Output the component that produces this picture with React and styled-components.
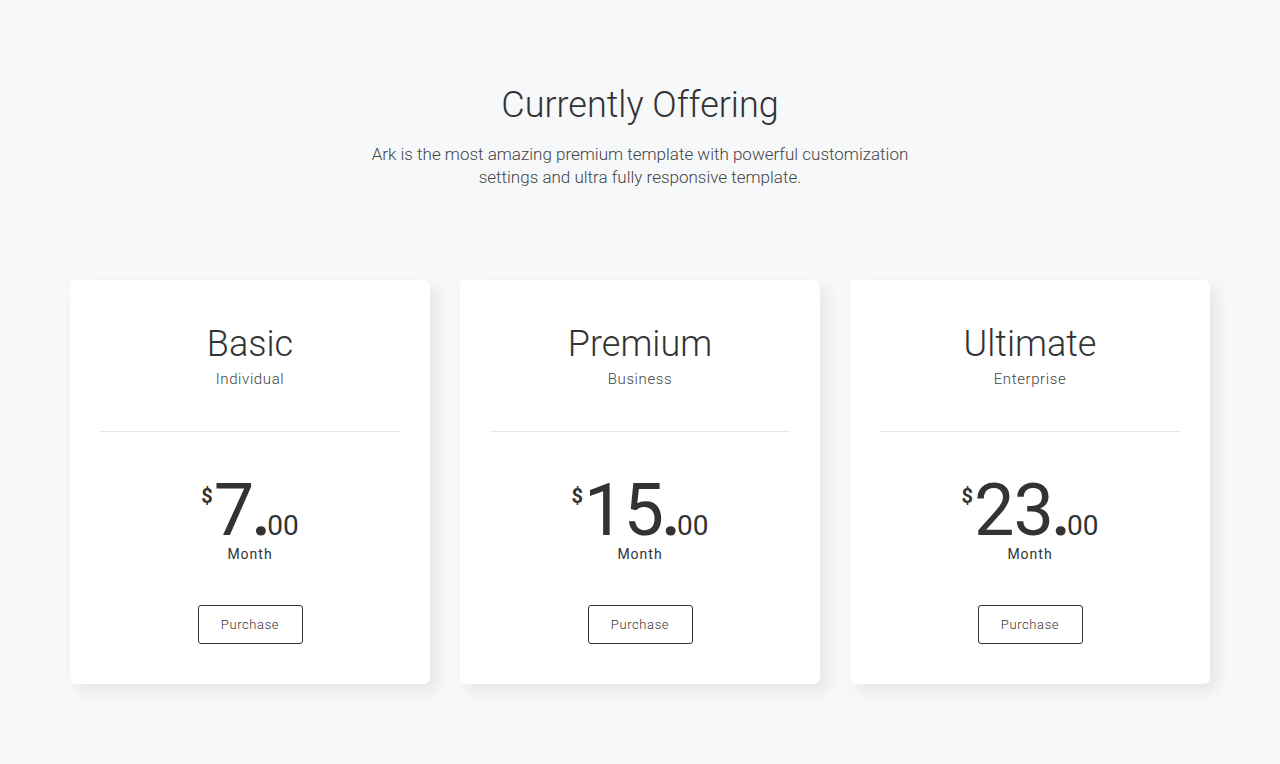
import React from "react";
import styled, { createGlobalStyle } from "styled-components";

const Global = createGlobalStyle`
  html, body { margin: 0; padding: 0; background: #f7f8fa; }
  body { font-family: Roboto, "Noto Sans", sans-serif; color: #333; }
  * { box-sizing: border-box; }
`;

const Section = styled.section`
  width: 1140px;
  margin: 0 auto;
  padding: 84px 0 80px;
`;

const Header = styled.header`
  text-align: center;
  margin-bottom: 91px;
`;

const Title = styled.h2`
  margin: 0 0 17px;
  font-size: 36px;
  line-height: 42px;
  font-weight: 300;
  color: #333;
`;

const Lead = styled.p`
  margin: 0 auto;
  width: 580px;
  font-size: 17px;
  line-height: 23px;
  font-weight: 300;
  color: #444;
`;

const Grid = styled.div`
  display: grid;
  grid-template-columns: repeat(3, 1fr);
  gap: 30px;
`;

const Card = styled.div`
  background: #fff;
  border-radius: 6px;
  box-shadow: 7px 7px 15px 0 rgba(0, 0, 0, 0.08);
  padding: 0 30px 40px;
  text-align: center;
`;

const CardHead = styled.div`
  padding: 42px 0 42px;
  border-bottom: 1px solid #e6e6e6;
`;

const Plan = styled.h3`
  margin: 0;
  font-size: 36px;
  line-height: 44px;
  font-weight: 300;
  color: #333;
`;

const Tier = styled.div`
  margin-top: 3px;
  font-size: 15px;
  line-height: 20px;
  font-weight: 300;
  letter-spacing: 0.6px;
  color: #444;
`;

const CardBody = styled.div`
  padding-top: 45px;
`;

const Price = styled.div`
  display: flex;
  justify-content: center;
  align-items: baseline;
  color: #333;
  line-height: 1;
`;

const Currency = styled.span`
  align-self: flex-start;
  font-size: 20px;
  font-weight: 700;
  margin-top: 9px;
  margin-right: 1px;
`;

const Amount = styled.span`
  font-size: 72px;
  font-weight: 400;
  line-height: 68px;
  letter-spacing: -1px;
`;

const Dot = styled.span`
  font-size: 72px;
  font-weight: 500;
  line-height: 68px;
  margin: 0 -4px 0 -2px;
`;

const Cents = styled.span`
  font-size: 28px;
  font-weight: 400;
`;

const Period = styled.div`
  margin-top: 0;
  font-size: 14px;
  line-height: 18px;
  letter-spacing: 1px;
  color: #333;
`;

const Button = styled.button`
  margin-top: 42px;
  width: 105px;
  height: 39px;
  background: transparent;
  border: 1px solid #333;
  border-radius: 3px;
  font-family: Roboto, sans-serif;
  font-size: 13px;
  font-weight: 300;
  letter-spacing: 0.6px;
  color: #333;
  cursor: pointer;
`;

const plans = [
  { name: "Basic", tier: "Individual", price: "7" },
  { name: "Premium", tier: "Business", price: "15" },
  { name: "Ultimate", tier: "Enterprise", price: "23" },
];

export default function App() {
  return (
    <>
      <Global />
      <Section>
        <Header>
          <Title>Currently Offering</Title>
          <Lead>
            Ark is the most amazing premium template with powerful customization
            settings and ultra fully responsive template.
          </Lead>
        </Header>
        <Grid>
          {plans.map((p) => (
            <Card key={p.name}>
              <CardHead>
                <Plan>{p.name}</Plan>
                <Tier>{p.tier}</Tier>
              </CardHead>
              <CardBody>
                <Price>
                  <Currency>$</Currency>
                  <Amount>{p.price}</Amount>
                  <Dot>.</Dot>
                  <Cents>00</Cents>
                </Price>
                <Period>Month</Period>
                <Button>Purchase</Button>
              </CardBody>
            </Card>
          ))}
        </Grid>
      </Section>
    </>
  );
}
